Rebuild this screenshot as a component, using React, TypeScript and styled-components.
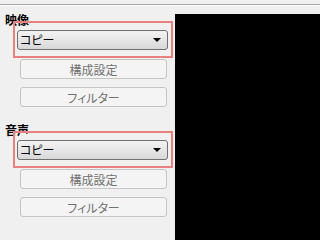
import React from "react";
import styled, { createGlobalStyle } from "styled-components";

const GlobalStyle = createGlobalStyle`
  html, body {
    margin: 0;
    padding: 0;
    background: #f0f0f0;
    font-family: "Noto Sans CJK JP", "Liberation Sans", sans-serif;
    font-feature-settings: "palt";
    overflow: hidden;
  }
`;

const sections = [{ title: "映像" }, { title: "音声" }];

function App() {
  return (
    <Page>
      <GlobalStyle />
      <TopRule />
      <Body>
        <Sidebar>
          {sections.map((s) => (
            <Section key={s.title}>
              <Heading>{s.title}</Heading>
              <Highlight>
                <Combo>
                  <span>コピー</span>
                  <Arrow />
                </Combo>
              </Highlight>
              <Button $first>構成設定</Button>
              <Button>フィルター</Button>
            </Section>
          ))}
        </Sidebar>
        <Preview />
      </Body>
    </Page>
  );
}

const Page = styled.div`
  width: 100vw;
  height: 100vh;
  padding-top: 4px;
  box-sizing: border-box;
  display: flex;
  flex-direction: column;
`;

const TopRule = styled.div`
  height: 1px;
  background: #a8a8a8;
  box-shadow: 0 1px 0 #fafafa;
`;

const Body = styled.div`
  flex: 1;
  display: flex;
`;

const Sidebar = styled.div`
  width: 175px;
  flex-shrink: 0;
  padding-top: 8px;
  box-sizing: border-box;
  display: flex;
  flex-direction: column;
  gap: 16px;
`;

const Preview = styled.div`
  flex: 1;
  margin-top: 9px;
  background: #000;
`;

const Section = styled.div`
  display: flex;
  flex-direction: column;
`;

const Heading = styled.div`
  padding-left: 5px;
  font-size: 12px;
  font-weight: bold;
  line-height: 14px;
  color: #000;
`;

const Highlight = styled.div`
  position: relative;
  margin: -6px 0 0 13px;
  width: 160px;
  box-sizing: border-box;
  border: 2px solid #e98080;
  padding: 7px 3px 6px 2px;
`;

const Combo = styled.div`
  height: 20px;
  box-sizing: border-box;
  border: 1px solid #707070;
  border-radius: 3px;
  background: linear-gradient(#f3f3f3, #e6e6e6 50%, #d8d8d8);
  display: flex;
  align-items: center;
  justify-content: space-between;
  padding: 0 6px 0 2px;
  font-size: 12px;
  color: #000;
  line-height: 1;
`;

const Arrow = styled.i`
  width: 0;
  height: 0;
  border-left: 4px solid transparent;
  border-right: 4px solid transparent;
  border-top: 4px solid #000;
`;

const Button = styled.div<{ $first?: boolean }>`
  margin: ${(p) => (p.$first ? "1px" : "8px")} 0 0 20px;
  width: 147px;
  height: 20px;
  box-sizing: border-box;
  border: 1px solid #c4c4c4;
  border-radius: 3px;
  background: #f4f4f4;
  color: #707070;
  font-size: 12px;
  display: flex;
  align-items: center;
  justify-content: center;
`;

export default App;
